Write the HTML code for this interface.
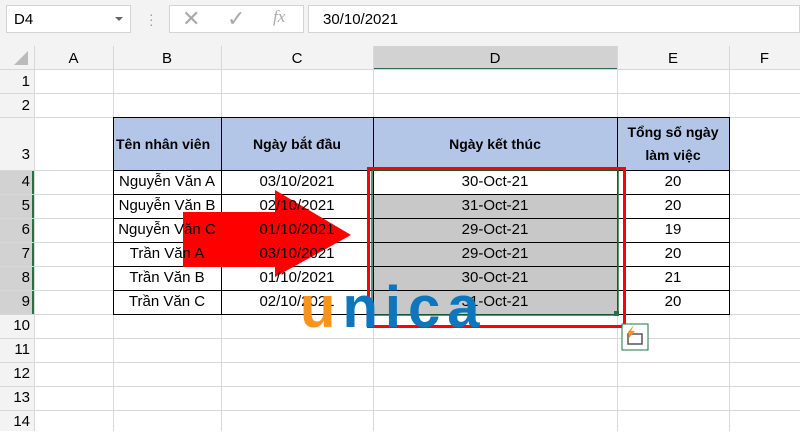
<!DOCTYPE html><html><head><style>
body{margin:0;width:800px;height:431px;overflow:hidden;background:#fff;font-family:"Liberation Sans",Arial,sans-serif;position:relative}
.a{position:absolute}
.c{position:absolute;display:flex;align-items:center;justify-content:center;font-size:15px;color:#000;box-sizing:border-box}
</style></head><body>
<div class="a" style="left:0;top:0;width:800px;height:46px;background:#f3f3f3"></div>
<div class="a" style="left:6px;top:5px;width:125px;height:28px;background:#fff;border:1px solid #d4d4d4;box-sizing:border-box;font-size:15px;padding:5px 0 0 7px">D4</div>
<div class="a" style="left:115px;top:17px;width:0;height:0;border-left:4px solid transparent;border-right:4px solid transparent;border-top:4px solid #666"></div>
<div class="a" style="left:149px;top:12px;color:#999;font-size:14px;line-height:5px">·<br>·<br>·</div>
<div class="a" style="left:169px;top:5px;width:135px;height:28px;background:#fff;border:1px solid #d4d4d4;box-sizing:border-box"></div>
<div class="a" style="left:182px;top:6px;color:#aaa;font-size:22px">✕</div>
<div class="a" style="left:227px;top:6px;color:#aaa;font-size:22px">✓</div>
<div class="a" style="left:273px;top:7px;color:#aaa;font-size:17px;font-style:italic;font-family:'Liberation Serif',serif">fx</div>
<div class="a" style="left:308px;top:5px;width:492px;height:28px;background:#fff;border:1px solid #d4d4d4;box-sizing:border-box;font-size:15px;padding:5px 0 0 14px">30/10/2021</div>
<svg class="a" style="left:0;top:46px" width="800" height="385">
<rect x="0" y="0" width="800" height="24" fill="#f3f3f3"/>
<rect x="0" y="0" width="34" height="385" fill="#f3f3f3"/>
<rect x="373" y="0" width="244" height="24" fill="#d2d2d2"/>
<line x1="373" y1="23" x2="617" y2="23" stroke="#217346" stroke-width="2"/>
<rect x="0" y="124" width="34" height="144" fill="#d2d2d2"/>
<line x1="33" y1="124" x2="33" y2="268" stroke="#217346" stroke-width="2"/>
<polygon points="28,5 28,19 14,19" fill="#bbb"/>
<g stroke="#d8d8d8" stroke-width="1">
<line x1="113.5" y1="0" x2="113.5" y2="385"/><line x1="221.5" y1="0" x2="221.5" y2="385"/><line x1="373.5" y1="0" x2="373.5" y2="385"/><line x1="617.5" y1="0" x2="617.5" y2="385"/><line x1="729.5" y1="0" x2="729.5" y2="385"/>
<line x1="0" y1="47.5" x2="800" y2="47.5"/><line x1="0" y1="71.5" x2="800" y2="71.5"/><line x1="0" y1="124.5" x2="800" y2="124.5"/><line x1="0" y1="148.5" x2="800" y2="148.5"/><line x1="0" y1="172.5" x2="800" y2="172.5"/><line x1="0" y1="196.5" x2="800" y2="196.5"/><line x1="0" y1="220.5" x2="800" y2="220.5"/><line x1="0" y1="244.5" x2="800" y2="244.5"/><line x1="0" y1="268.5" x2="800" y2="268.5"/><line x1="0" y1="292.5" x2="800" y2="292.5"/><line x1="0" y1="316.5" x2="800" y2="316.5"/><line x1="0" y1="340.5" x2="800" y2="340.5"/><line x1="0" y1="364.5" x2="800" y2="364.5"/>
<line x1="34.5" y1="0" x2="34.5" y2="385"/><line x1="0" y1="23.5" x2="800" y2="23.5"/>
</g>
<rect x="113" y="71" width="616" height="53" fill="#b4c6e7"/>
<rect x="373" y="148" width="244" height="120" fill="#c8c8c8"/>
<g stroke="#000" stroke-width="1" fill="none">
<rect x="113.5" y="71.5" width="616" height="197"/>
<line x1="221.5" y1="71" x2="221.5" y2="268"/><line x1="373.5" y1="71" x2="373.5" y2="268"/><line x1="617.5" y1="71" x2="617.5" y2="268"/>
<line x1="113" y1="124.5" x2="729" y2="124.5"/><line x1="113" y1="148.5" x2="729" y2="148.5"/><line x1="113" y1="172.5" x2="729" y2="172.5"/><line x1="113" y1="196.5" x2="729" y2="196.5"/><line x1="113" y1="220.5" x2="729" y2="220.5"/><line x1="113" y1="244.5" x2="729" y2="244.5"/>
</g>
<rect x="372" y="124" width="246" height="145" fill="none" stroke="#217346" stroke-width="1.5"/>
<rect x="614" y="265" width="5" height="5" fill="#217346"/>
<rect x="368.5" y="122.5" width="256" height="158" fill="none" stroke="#f00" stroke-width="3"/>
<rect x="622" y="278" width="26" height="26" fill="#fff" stroke="#217346"/>
<rect x="628" y="288" width="14" height="10" fill="none" stroke="#555" stroke-width="1.5"/>
<polygon points="628,286 634,279 631,285 635,285 629,292" fill="#f7941d"/>
<polygon points="183,166 275,166 275,144 351,189 275,231 275,221 183,221" fill="#f00"/>
</svg>
<div class="c" style="left:34px;top:46px;width:79px;height:24px">A</div>
<div class="c" style="left:113px;top:46px;width:108px;height:24px">B</div>
<div class="c" style="left:221px;top:46px;width:152px;height:24px">C</div>
<div class="c" style="left:373px;top:46px;width:244px;height:24px">D</div>
<div class="c" style="left:617px;top:46px;width:112px;height:24px">E</div>
<div class="c" style="left:729px;top:46px;width:71px;height:24px">F</div>
<div class="a" style="left:0;top:70px;width:30px;font-size:15px;line-height:24px;text-align:right">1<br>2</div>
<div class="c" style="left:0;top:146px;width:34px;justify-content:flex-end;padding-right:4px">3</div>
<div class="a" style="left:0;top:170px;width:30px;font-size:15px;line-height:24px;text-align:right">4<br>5<br>6<br>7<br>8<br>9<br>10<br>11<br>12<br>13<br>14</div>
<div class="c" style="left:113px;top:117px;width:108px;height:53px;font-weight:bold;font-size:14px;justify-content:flex-start;padding-left:3px">Tên nhân viên</div>
<div class="c" style="left:221px;top:117px;width:152px;height:53px;font-weight:bold;font-size:14px">Ngày bắt đầu</div>
<div class="c" style="left:373px;top:117px;width:244px;height:53px;font-weight:bold;font-size:14px">Ngày kết thúc</div>
<div class="c" style="left:617px;top:117px;width:112px;height:53px;font-weight:bold;font-size:14px;text-align:center;line-height:23px">Tổng số ngày<br>làm việc</div>
<div class="a" style="left:113px;top:170px;width:108px;font-size:15px;line-height:24px;text-align:center">Nguyễn Văn A<br>Nguyễn Văn B<br>Nguyễn Văn C<br>Trần Văn A<br>Trần Văn B<br>Trần Văn C</div>
<div class="a" style="left:221px;top:170px;width:152px;font-size:15px;line-height:24px;text-align:center">03/10/2021<br>02/10/2021<br>01/10/2021<br>03/10/2021<br>01/10/2021<br>02/10/2021</div>
<div class="a" style="left:373px;top:170px;width:244px;font-size:15px;line-height:24px;text-align:center">30-Oct-21<br>31-Oct-21<br>29-Oct-21<br>29-Oct-21<br>30-Oct-21<br>31-Oct-21</div>
<div class="a" style="left:617px;top:170px;width:112px;font-size:15px;line-height:24px;text-align:center">20<br>20<br>19<br>20<br>21<br>20</div>
<div class="a" style="left:300px;top:278px;font-size:58px;font-weight:bold;letter-spacing:7px;line-height:60px"><span style="color:#f7941d">u</span><span style="color:#0d76bd">nica</span></div>
</body></html>
